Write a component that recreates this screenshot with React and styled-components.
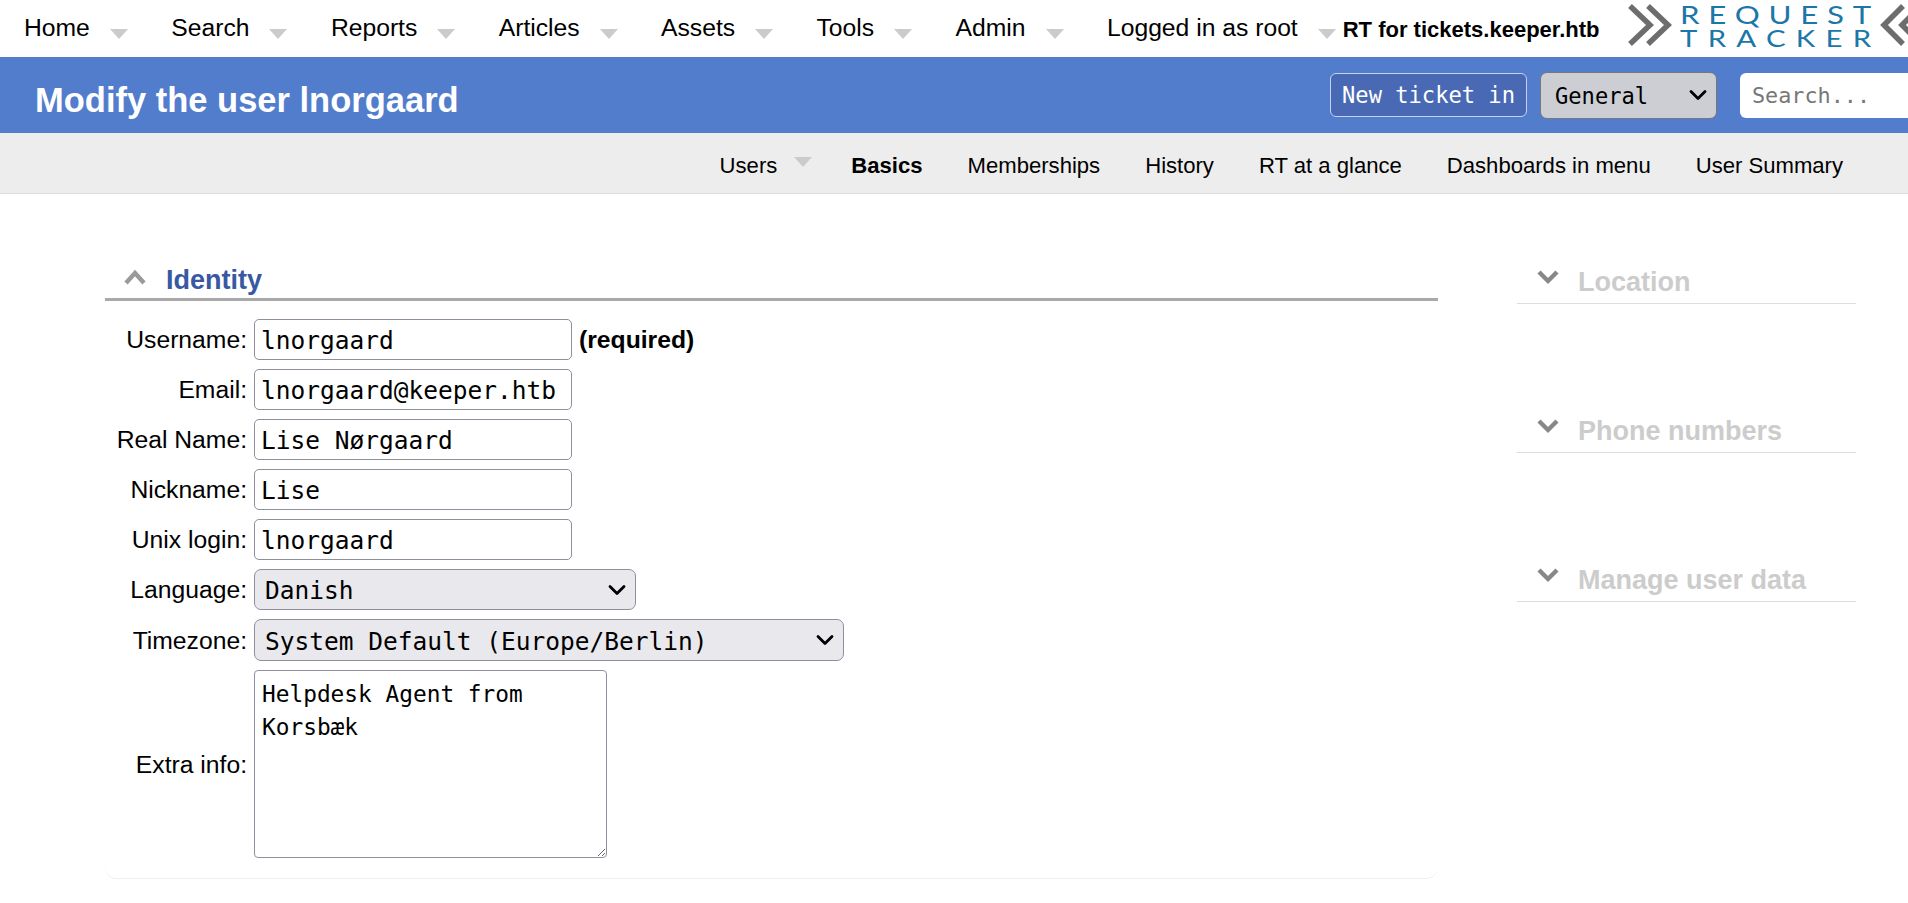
import React from "react";
import styled, { createGlobalStyle } from "styled-components";
import { ChevronDown } from "lucide-react";

const GlobalStyle = createGlobalStyle`
  html, body {
    margin: 0;
    padding: 0;
    height: 100%;
    overflow: hidden;
    background: #fff;
  }
  body {
    font-family: "Liberation Sans", Arial, sans-serif;
    font-size: 24.7px;
    color: #000;
  }
  * {
    box-sizing: border-box;
  }
`;

const mono = `"DejaVu Sans Mono", "Liberation Mono", monospace`;

const Page = styled.div`
  width: 1908px;
  height: 903px;
  overflow: hidden;
`;

const TopBar = styled.div`
  display: flex;
  align-items: center;
  height: 57px;
  padding-left: 24px;
  overflow: hidden;
`;

const TopNav = styled.nav`
  display: flex;
  align-items: center;
  gap: 43.4px;
`;

const TopItem = styled.a`
  display: flex;
  align-items: center;
  padding-bottom: 2px;
  white-space: nowrap;
`;

const Arrow = styled.span`
  width: 0;
  height: 0;
  margin-left: ${(p) => p.$offset || 20}px;
  margin-right: ${(p) => p.$after || 0}px;
  margin-top: ${(p) => p.$top || 12}px;
  border-left: 9px solid transparent;
  border-right: 9px solid transparent;
  border-top: 10px solid #cbcbcb;
`;

const Brand = styled.div`
  flex: none;
  margin-left: 7px;
  padding-top: 3px;
  font-size: 22px;
  font-weight: 700;
  white-space: nowrap;
`;

const LogoSvg = styled.svg`
  flex: none;
  display: block;
  margin-left: 28px;
`;

const PageHeader = styled.header`
  display: flex;
  align-items: center;
  height: 76px;
  background: #527ccc;
  overflow: hidden;
`;

const Title = styled.h1`
  flex: 0 0 1330px;
  margin: 0;
  padding: 10px 0 0 35px;
  font-size: 34.5px;
  font-weight: 700;
  color: #fff;
`;

const Actions = styled.div`
  flex: none;
  display: flex;
  align-items: center;
`;

const NewTicket = styled.button`
  height: 44px;
  width: 197px;
  padding: 0;
  border: 1px solid #c6d3ee;
  border-radius: 6px;
  background: #4a69b4;
  color: #fff;
  font-family: ${mono};
  font-size: 22.1px;
`;

const SelectWrap = styled.div`
  position: relative;
  flex: none;
  width: ${(p) => p.$width}px;
  margin-left: ${(p) => p.$left || 0}px;
`;

const Select = styled.select`
  display: block;
  width: 100%;
  height: ${(p) => p.$height}px;
  padding: 2px 0 0 ${(p) => p.$pad}px;
  appearance: none;
  border: 1px solid ${(p) => p.$border};
  border-radius: 7px;
  background: ${(p) => p.$bg};
  color: #000;
  font-family: ${mono};
  font-size: ${(p) => p.$size}px;
`;

const SelectArrow = styled(ChevronDown)`
  position: absolute;
  right: 5px;
  top: 50%;
  transform: translateY(-50%);
  pointer-events: none;
`;

const SearchBox = styled.input`
  flex: none;
  width: 240px;
  height: 45px;
  margin-left: 23px;
  padding: 0 12px;
  border: 0;
  border-radius: 6px;
  background: #fff;
  font-family: ${mono};
  font-size: 21.8px;
  &::placeholder {
    color: #777;
  }
`;

const SubNav = styled.nav`
  display: flex;
  justify-content: flex-end;
  align-items: center;
  gap: 45px;
  height: 61px;
  padding: 6px 65px 0 0;
  border-bottom: 1px solid #ddd;
  background: #ededed;
  font-size: 22.1px;
`;

const SubItem = styled.a`
  display: flex;
  align-items: center;
  font-weight: ${(p) => (p.$active ? 700 : 400)};
  white-space: nowrap;
`;

const Content = styled.main`
  display: flex;
  align-items: flex-start;
  padding: 62px 0 0 105px;
`;

const IdentityBox = styled.section`
  flex: none;
  width: 1332.5px;
  height: 623px;
  border-bottom: 1px solid #eee;
  border-radius: 0 0 12px 12px;
`;

const BoxHead = styled.div`
  display: flex;
  align-items: center;
  height: 45px;
  padding: 7px 0 0 19px;
  border-bottom: 3px solid #a9a9a9;
`;

const BoxTitle = styled.h2`
  margin: 0 0 0 20px;
  font-size: 27px;
  font-weight: 700;
  color: #3858a3;
`;

const Form = styled.div`
  display: grid;
  grid-template-columns: 142px auto;
  justify-content: start;
  column-gap: 7px;
  row-gap: 9px;
  padding-top: 18px;
`;

const Label = styled.label`
  align-self: center;
  padding-top: 1px;
  text-align: right;
  white-space: nowrap;
`;

const Field = styled.div`
  display: flex;
  align-items: center;
`;

const TextInput = styled.input`
  width: 318px;
  height: 41px;
  padding: 2px 6px 0;
  border: 1px solid #8f8f9d;
  border-radius: 5px;
  color: #000;
  font-family: ${mono};
  font-size: 24.5px;
`;

const Required = styled.strong`
  margin-left: 7px;
`;

const TextArea = styled.textarea`
  display: block;
  width: 353px;
  height: 188px;
  padding: 7px;
  border: 1px solid #8f8f9d;
  border-radius: 4px;
  color: #000;
  font-family: ${mono};
  font-size: 22.8px;
  line-height: 33px;
`;

const SideColumn = styled.aside`
  flex: none;
  width: 339px;
  margin-left: 79.5px;
`;

const Widget = styled.div`
  display: flex;
  align-items: center;
  height: 48px;
  margin-bottom: 101px;
  padding: 6px 0 0 20px;
  border-bottom: 1px solid #ddd;
`;

const WidgetTitle = styled.h2`
  margin: 0 0 0 19px;
  font-size: 27px;
  font-weight: 700;
  color: #ccc;
`;

const Chevron = styled.svg`
  flex: none;
  display: block;
  position: relative;
  top: ${(p) => p.$shift}px;
`;

function Fold({ up, color }) {
  return (
    <Chevron $shift={up ? -4 : -6} width="22" height="16" viewBox="0 0 22 16">
      <polyline
        points={up ? "2,14 11,4 20,14" : "2,3 11,12 20,3"}
        fill="none"
        stroke={color}
        strokeWidth="4.4"
      />
    </Chevron>
  );
}

function Logo() {
  return (
    <LogoSvg width="290" height="57" viewBox="0 0 290 57">
      <g fill="none" stroke="#6d6d6d" strokeWidth="5.5">
        <polyline points="3,6 23,25 3,44" />
        <polyline points="21,6 41,25 21,44" />
        <polyline points="276,6 257,25 276,44" />
        <polyline points="294,6 275,25 294,44" />
      </g>
      <g fill="#1a77a8" fontFamily="Lato, sans-serif" fontWeight="400">
        <text transform="translate(53,24) scale(1.25,1)" fontSize="25" textLength="153" lengthAdjust="spacing">
          REQUEST
        </text>
        <text transform="translate(53,47) scale(1.25,1)" fontSize="23.5" textLength="153" lengthAdjust="spacing">
          TRACKER
        </text>
      </g>
    </LogoSvg>
  );
}

const topItems = ["Home", "Search", "Reports", "Articles", "Assets", "Tools", "Admin", "Logged in as root"];
const subItems = ["Memberships", "History", "RT at a glance", "Dashboards in menu", "User Summary"];
const widgets = ["Location", "Phone numbers", "Manage user data"];
const inputs = [
  ["Username", "lnorgaard"],
  ["Email", "lnorgaard@keeper.htb"],
  ["Real Name", "Lise Nørgaard"],
  ["Nickname", "Lise"],
  ["Unix login", "lnorgaard"],
];

export default function App() {
  return (
    <Page>
      <GlobalStyle />
      <TopBar>
        <TopNav>
          {topItems.map((item) => (
            <TopItem key={item}>
              {item}
              <Arrow />
            </TopItem>
          ))}
        </TopNav>
        <Brand>RT for tickets.keeper.htb</Brand>
        <Logo />
      </TopBar>
      <PageHeader>
        <Title>Modify the user lnorgaard</Title>
        <Actions>
          <NewTicket>New ticket in</NewTicket>
          <SelectWrap $width={177} $left={13}>
            <Select $height={47} $pad={14} $size={22.1} $bg="#cdced3" $border="#777" defaultValue="General">
              <option>General</option>
            </Select>
            <SelectArrow size={28} strokeWidth={2.4} color="#000" />
          </SelectWrap>
          <SearchBox placeholder="Search..." />
        </Actions>
      </PageHeader>
      <SubNav>
        <SubItem>
          Users
          <Arrow $offset={17} $after={-6} $top={-8} />
        </SubItem>
        <SubItem $active>Basics</SubItem>
        {subItems.map((item) => (
          <SubItem key={item}>{item}</SubItem>
        ))}
      </SubNav>
      <Content>
        <IdentityBox>
          <BoxHead>
            <Fold up color="#9a9a9a" />
            <BoxTitle>Identity</BoxTitle>
          </BoxHead>
          <Form>
            {inputs.map(([label, value]) => (
              <React.Fragment key={label}>
                <Label>{label}:</Label>
                <Field>
                  <TextInput defaultValue={value} />
                  {label === "Username" && <Required>(required)</Required>}
                </Field>
              </React.Fragment>
            ))}
            <Label>Language:</Label>
            <SelectWrap $width={382}>
              <Select $height={41} $pad={10} $size={24.5} $bg="#e9e9ed" $border="#8f8f9d" defaultValue="Danish">
                <option>Danish</option>
              </Select>
              <SelectArrow size={28} strokeWidth={2.4} color="#000" />
            </SelectWrap>
            <Label>Timezone:</Label>
            <SelectWrap $width={590}>
              <Select $height={42} $pad={10} $size={24.5} $bg="#e9e9ed" $border="#8f8f9d" defaultValue="System Default (Europe/Berlin)">
                <option>System Default (Europe/Berlin)</option>
              </Select>
              <SelectArrow size={28} strokeWidth={2.4} color="#000" />
            </SelectWrap>
            <Label>Extra info:</Label>
            <TextArea defaultValue={"Helpdesk Agent from Korsbæk"} />
          </Form>
        </IdentityBox>
        <SideColumn>
          {widgets.map((title) => (
            <Widget key={title}>
              <Fold color="#888" />
              <WidgetTitle>{title}</WidgetTitle>
            </Widget>
          ))}
        </SideColumn>
      </Content>
    </Page>
  );
}
